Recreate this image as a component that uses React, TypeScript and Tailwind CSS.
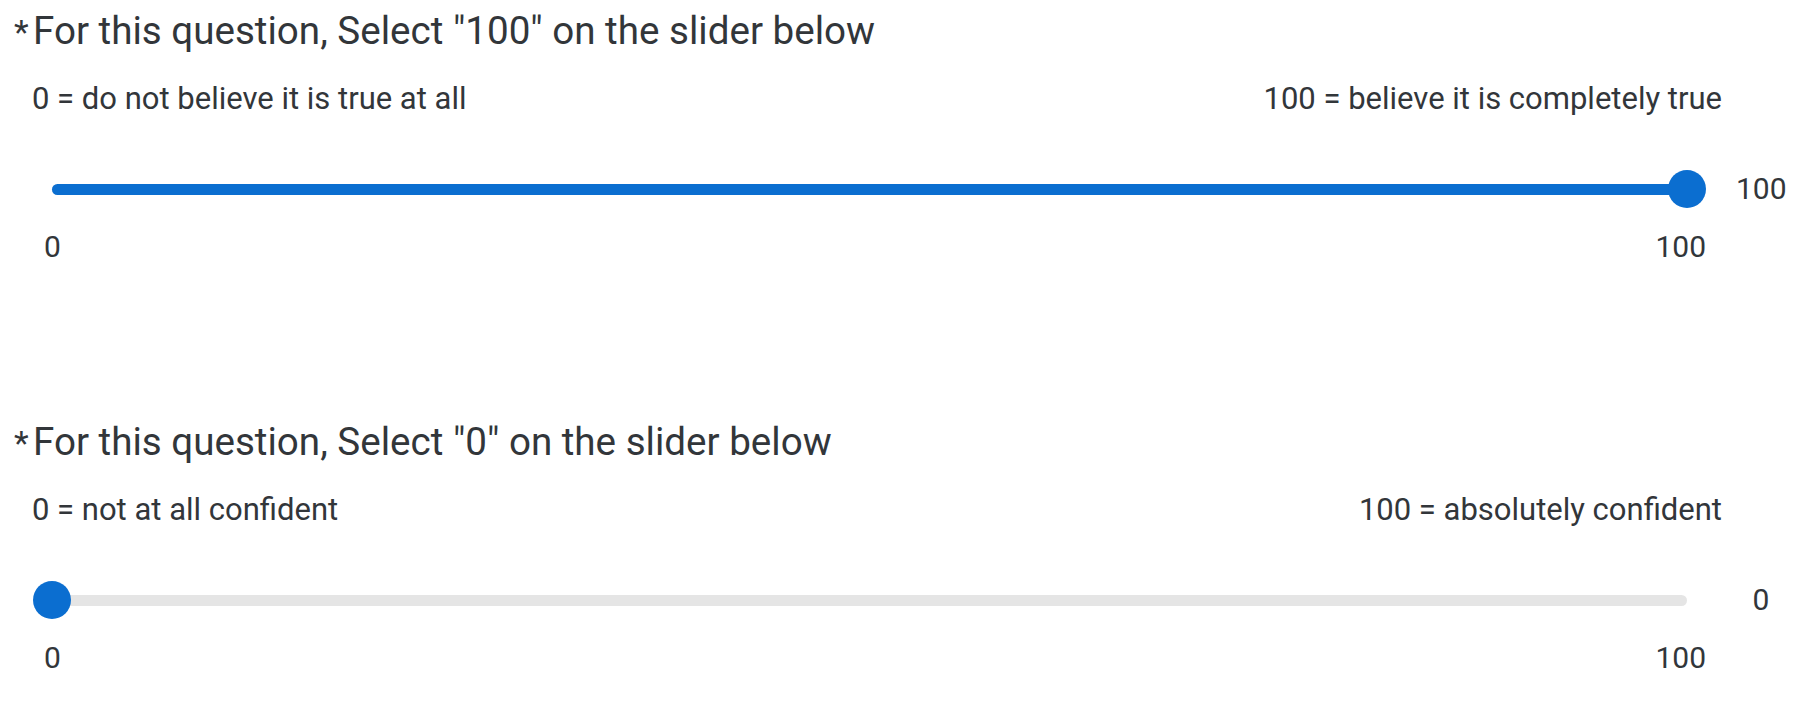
const questions = [
  {
    title: 'For this question, Select "100" on the slider below',
    minLabel: '0 = do not believe it is true at all',
    maxLabel: '100 = believe it is completely true',
    value: 100,
  },
  {
    title: 'For this question, Select "0" on the slider below',
    minLabel: '0 = not at all confident',
    maxLabel: '100 = absolutely confident',
    value: 0,
  },
];

function SliderQuestion({ q, first }: { q: (typeof questions)[number]; first: boolean }) {
  return (
    <div className={first ? '' : 'mt-[154px]'}>
      {/* Question text */}
      <div className="flex items-baseline">
        <span className="w-[19px] text-[34px] leading-[46px]">*</span>
        <span className="text-[38.6px] leading-[46px]">{q.title}</span>
      </div>

      {/* End labels */}
      <div className="mt-[26px] ml-[18px] flex w-[1690px] justify-between text-[31px] leading-[36px]">
        <span>{q.minLabel}</span>
        <span>{q.maxLabel}</span>
      </div>

      {/* Track + value */}
      <div className="mt-[53px] flex h-[38px] items-center">
        <div className="relative ml-[38px] h-[11px] w-[1635px] rounded-full bg-[#e5e5e5]">
          <div className="h-full rounded-full bg-[#0b6ed0]" style={{ width: `${q.value}%` }} />
          <div
            className="absolute top-1/2 h-[38px] w-[38px] -translate-x-1/2 -translate-y-1/2 rounded-full bg-[#0b6ed0]"
            style={{ left: `${q.value}%` }}
          />
        </div>
        <span className="ml-[49px] w-[50px] text-center text-[30px] leading-[36px]">{q.value}</span>
      </div>

      {/* Ticks */}
      <div className="mt-[21px] ml-[30px] flex w-[1662px] justify-between text-[30px] leading-[36px]">
        <span>0</span>
        <span>100</span>
      </div>
    </div>
  );
}

export default function App() {
  return (
    <div className="min-h-screen bg-white pt-[8px] pl-[14px] text-[#32363a] font-['Roboto',sans-serif]">
      {questions.map((q, i) => (
        <SliderQuestion key={i} q={q} first={i === 0} />
      ))}
    </div>
  );
}
